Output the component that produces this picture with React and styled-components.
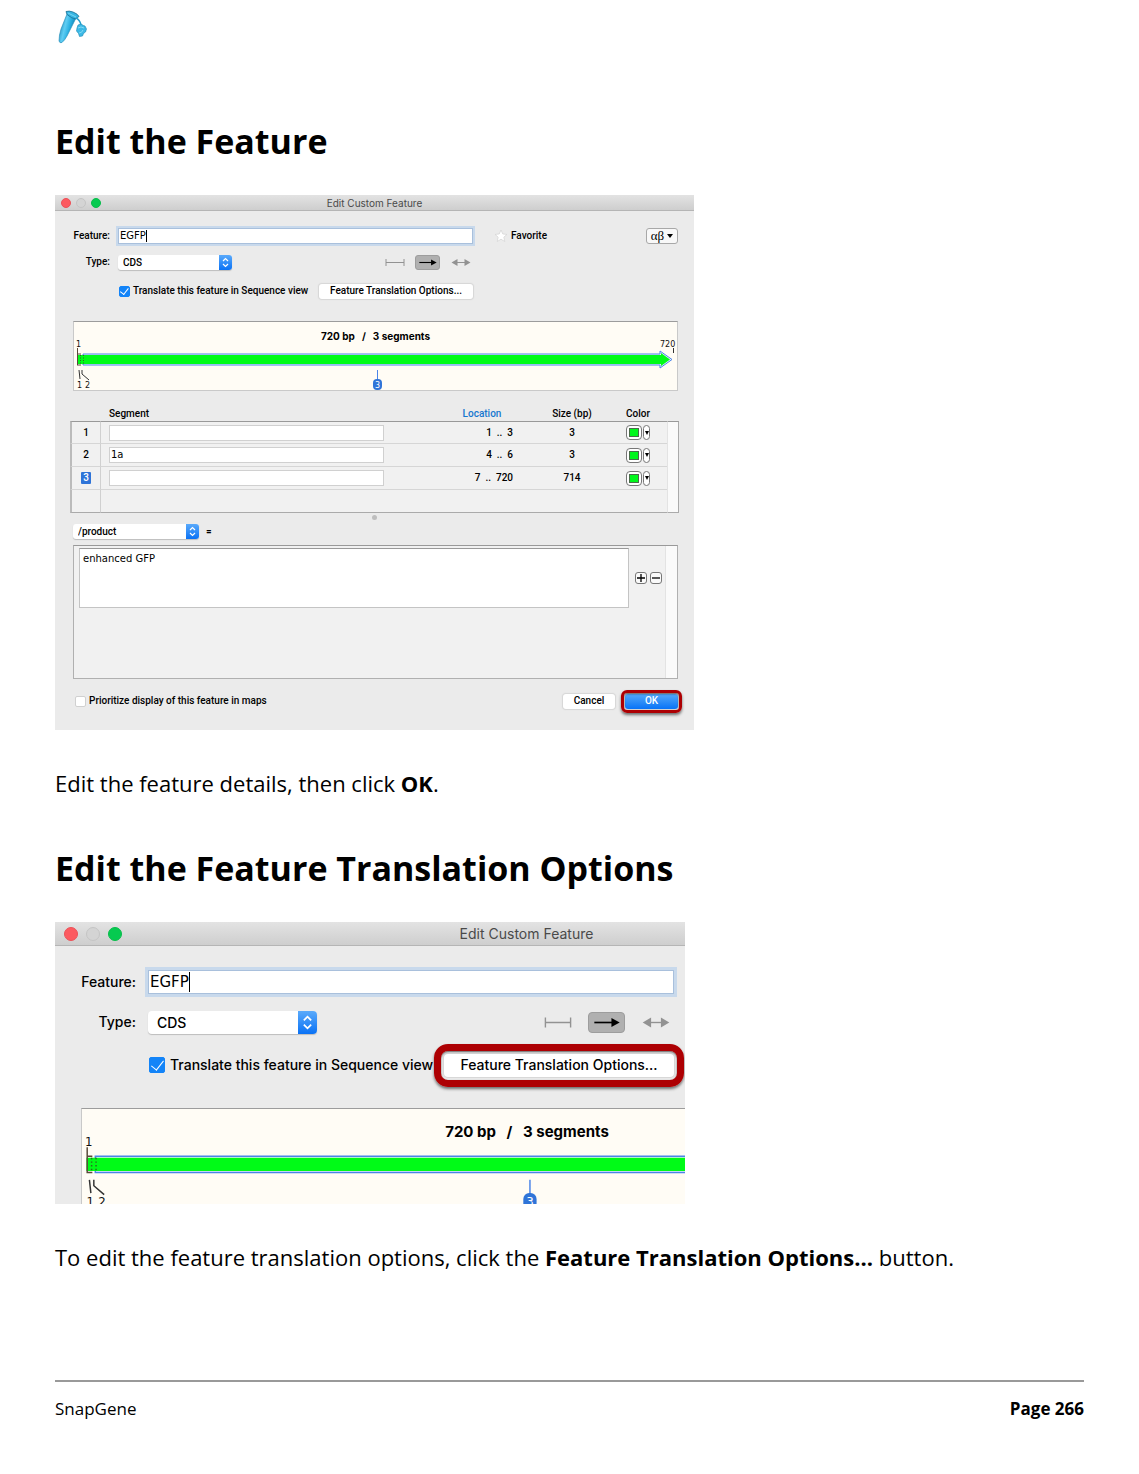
import React, { useId } from "react";
import styled, { createGlobalStyle, ThemeProvider, css } from "styled-components";

const GlobalStyle = createGlobalStyle`
  *, *::before, *::after { box-sizing: border-box; }
  body { margin: 0; background: #fff; color: #000; font-family: "Open Sans", "Noto Sans", sans-serif; }
  button, input, select, textarea { font: inherit; color: inherit; margin: 0; }
`;

/* Two zoom levels of the same dialog */
const regular = {
  width: "639px", face: "Roboto, Inter, sans-serif", text: 10, title: 10, mono: 10, heading: 10,
  bar: 16, light: 10, lightGap: 5, lightPad: 6,
  labelCol: 55, labelGap: 8, controls: 355, row: 16, padTop: 17,
  gapA: 10, gapB: 13, gapC: 22, halo: 2, typeWidth: 114, stepper: 13,
  check: 11, checkGap: 3, push: 154, shapeW: 25, shapeH: 15, shapeGap: 8, icon: 20,
  sideL: 18, sideR: 16, mapTop: 9, radius: 3, inset: 5,
};
const enlarged = {
  width: "943px", face: "Inter, Roboto, sans-serif", text: 14, title: 14, mono: 15, heading: 15,
  bar: 24, light: 14, lightGap: 8, lightPad: 9,
  labelCol: 81, labelGap: 12, controls: 526, row: 24, padTop: 24,
  gapA: 16, gapB: 19, gapC: 31, halo: 3, typeWidth: 169, stepper: 19,
  check: 16, checkGap: 5, push: 230, shapeW: 37, shapeH: 21, shapeGap: 12, icon: 30,
  sideL: 26, sideR: 25, mapTop: 15, radius: 4, inset: 9,
};

const px = (key) => ({ theme }) => `${theme[key]}px`;

const Page = styled.div`
  min-height: 100vh;
  padding: 10px 55px 53px;
  display: flex;
  flex-direction: column;
`;
const Logo = styled.svg`
  display: block;
  width: 30px;
  height: 34px;
  margin-left: 3px;
`;
const Article = styled.main`
  padding-top: 27px;
  flex: 1;
`;
const Heading = styled.h2`
  margin: 46px 0 30px;
  font-size: 34px;
  line-height: 48px;
  font-weight: 700;
`;
const Para = styled.p`
  margin: 38px 0 0;
  font-size: 22px;
  line-height: 30px;
`;
const PageFooter = styled.footer`
  border-top: 2px solid #999;
  padding-top: 15px;
  display: flex;
  justify-content: space-between;
  font-size: 17px;
  line-height: 24px;
`;

const Figure = styled.figure`
  margin: 0;
  max-width: ${({ $crop }) => ($crop ? "630px" : "639px")};
  ${({ $crop }) => $crop && css`height: 282px; overflow: hidden;`}
`;
const Dialog = styled.section`
  width: ${({ theme }) => theme.width};
  background: #ebebeb;
  font-family: ${({ theme }) => theme.face};
  font-size: ${px("text")};
  font-weight: 500;
  line-height: ${px("row")};
`;
const TitleBar = styled.header`
  display: grid;
  grid-template-columns: 1fr auto 1fr;
  align-items: center;
  height: ${px("bar")};
  padding: 0 ${px("lightPad")};
  background: linear-gradient(#e3e3e3, #cecece);
  border-bottom: 1px solid #b5b5b5;
  color: #4a4a4a;
  font-family: Inter, sans-serif;
  font-size: ${px("title")};
  font-weight: 400;
`;
const Lights = styled.div`
  display: flex;
  gap: ${px("lightGap")};
`;
const Light = styled.i`
  width: ${px("light")};
  height: ${px("light")};
  border-radius: 50%;
  background: ${({ $c }) => $c};
  border: 1px solid ${({ $b }) => $b};
`;
const Form = styled.div`
  padding-top: ${px("padTop")};
`;
const Row = styled.div`
  display: flex;
  align-items: center;
  height: ${px("row")};
  padding-right: ${px("sideR")};
  margin-bottom: ${({ theme, $gap }) => theme[$gap]}px;
`;
const Label = styled.label`
  width: ${px("labelCol")};
  margin-right: ${px("labelGap")};
  text-align: right;
  flex: none;
`;
const Controls = styled.div`
  width: ${px("controls")};
  flex: none;
  display: flex;
  align-items: center;
  justify-content: space-between;
`;
const FieldWrap = styled.div`
  position: relative;
  flex: 1;
  display: flex;
`;
const Field = styled.input`
  width: 100%;
  height: ${px("row")};
  padding: 0 1px;
  border: 1px solid #a9c0dc;
  border-radius: 0;
  outline: none;
  background: #fff;
  box-shadow: 0 0 0 ${px("halo")} #c8d9ec;
  font-family: "DejaVu Sans", sans-serif;
  font-size: ${px("mono")};
  font-weight: 400;
`;
const Caret = styled.i`
  position: absolute;
  top: 2px;
  bottom: 2px;
  left: ${({ theme }) => theme.mono * 2.6 + 2}px;
  width: 1px;
  background: #000;
`;
const SelectBox = styled.div`
  display: flex;
  width: ${({ $w }) => $w}px;
  height: ${({ theme }) => theme.row - 1}px;
  border-radius: ${px("radius")};
  background: #fff;
  box-shadow: 0 1px 1px #bdbdbd;
  overflow: hidden;
`;
const Select = styled.select`
  appearance: none;
  flex: 1;
  min-width: 0;
  border: 0;
  background: transparent;
  padding: 0 ${px("inset")};
  outline: none;
`;
const Stepper = styled.span`
  width: ${px("stepper")};
  background: linear-gradient(#5aaafb, #0a72f5);
  svg { display: block; width: 100%; height: 100%; }
`;
const Shapes = styled.div`
  display: flex;
  align-items: center;
  gap: ${px("shapeGap")};
`;
const ShapeButton = styled.button`
  display: grid;
  place-items: center;
  width: ${px("shapeW")};
  height: ${px("shapeH")};
  padding: 0;
  border: ${({ $on }) => ($on ? "1px solid #9d9d9d" : "0")};
  border-radius: ${px("radius")};
  background: ${({ $on }) => ($on ? "#b0b0b0" : "transparent")};
  svg { display: block; width: ${px("icon")}; height: 100%; }
`;
const CheckLabel = styled.label`
  display: flex;
  align-items: center;
  gap: ${px("checkGap")};
  padding-left: 1px;
  white-space: nowrap;
`;
const Check = styled.input`
  appearance: none;
  display: grid;
  place-items: center;
  width: ${px("check")};
  height: ${px("check")};
  border-radius: 2px;
  border: 1px solid #d0d0d0;
  background: #fff;
  &:checked { background: #1384f8; border-color: #1384f8; }
  &:checked::after {
    content: "";
    width: 50%;
    height: 85%;
    border: solid #fff;
    border-width: 0 1px 1px 0;
    transform: translateY(-10%) rotate(38deg);
  }
`;
const Push = styled.button`
  position: relative;
  flex: none;
  width: ${({ $w }) => $w}px;
  height: ${({ theme }) => theme.row - 1}px;
  padding: 0;
  border: 0;
  border-radius: ${px("radius")};
  background: ${({ $primary }) => ($primary ? "linear-gradient(#55a9f8, #0873f7)" : "#fff")};
  color: ${({ $primary }) => ($primary ? "#fff" : "#000")};
  box-shadow: 0 0 1px 1px #d6d6d6;
  font-weight: 500;
  line-height: 1;
  white-space: nowrap;
  &::after {
    content: ${({ $ring }) => ($ring ? '""' : "none")};
    position: absolute;
    inset: ${({ $ring }) => `-${Math.round($ring * 1.4)}px`};
    border: ${({ $ring }) => $ring}px solid #ad0003;
    border-radius: ${({ $ring }) => $ring * 2}px;
    box-shadow: 0 2px 3px #0008, inset 0 1px 2px #0009;
  }
`;
const Favorite = styled.button`
  display: flex;
  align-items: center;
  gap: 3px;
  margin-left: 21px;
  padding: 0;
  border: 0;
  background: none;
  svg { width: 14px; height: 14px; }
`;
const Greek = styled.button`
  display: flex;
  align-items: center;
  justify-content: center;
  gap: 3px;
  width: 32px;
  height: 16px;
  margin-left: auto;
  padding: 0;
  border: 1px solid #a8a8a8;
  border-radius: 3px;
  background: #f8f8f8;
  font-family: "Liberation Serif", serif;
  font-size: 13px;
  line-height: 12px;
  svg { width: 6px; height: 4px; }
`;
const MapBox = styled.div`
  position: relative;
  margin: 0 ${px("sideR")} 0 ${px("sideL")};
  background: #fffcf5;
  border: 1px solid #c9c9c9;
  border-top-color: #9c9c9c;
`;
const MapTitle = styled.strong`
  position: absolute;
  top: ${px("mapTop")};
  left: 0;
  right: 0;
  text-align: center;
  font-family: Inter, sans-serif;
  font-size: ${px("heading")};
  font-weight: 700;
  line-height: 1;
  white-space: pre;
`;
const MapSvg = styled.svg`
  display: block;
  width: 100%;
  text { font: 400 8px "DejaVu Sans", sans-serif; fill: #111; }
`;

const Segments = styled.table`
  width: 609px;
  margin: 17px 0 0 15px;
  table-layout: fixed;
  border-collapse: separate;
  border-spacing: 0;
  th { height: 13px; padding: 0; font-weight: 500; line-height: 12px; vertical-align: top; }
  td { height: 23px; padding: 0; background: #f1f1f1; border-bottom: 1px solid #d6d6d6; text-align: center; }
  tbody tr:first-child td { border-top: 1px solid #999; }
  tbody tr:last-child td { border-bottom-color: #aaa; }
  td:first-child { border-left: 2px solid #bbb; border-right: 1px solid #d0d0d0; }
  td:last-child { background: #fafafa; border-left: 1px solid #e3e3e3; border-right: 1px solid #aaa; }
  tbody tr:not(:last-child) td:last-child { border-bottom: 0; }
`;
const SegHead = styled.th`
  text-align: ${({ $left }) => ($left ? "left" : "center")};
  &&& { padding-left: ${({ $indent }) => $indent || 0}px; }
  color: ${({ $blue }) => ($blue ? "#1677cf" : "#000")};
`;
const LocationCell = styled.td`
  &&& { text-align: right; padding-right: 5px; }
  white-space: pre;
`;
const SegInput = styled.input`
  display: block;
  width: 275px;
  height: 16px;
  margin-left: 8px;
  padding: 0 1px;
  border: 1px solid #d0d0d0;
  background: #fff;
  font-family: "DejaVu Sans", sans-serif;
  font-weight: 400;
`;
const Badge = styled.span`
  display: inline-block;
  padding: 0 2px;
  line-height: 12px;
  border-radius: 1px;
  background: ${({ $on }) => ($on ? "#2f74d8" : "transparent")};
  color: ${({ $on }) => ($on ? "#fff" : "#000")};
`;
const ColorPick = styled.div`
  display: flex;
  gap: 1px;
`;
const Swatch = styled.button`
  display: grid;
  place-items: center;
  width: 16px;
  height: 15px;
  padding: 0;
  border: 1px solid #777;
  border-radius: 4px;
  background: #fff;
  &::before { content: ""; width: 10px; height: 9px; background: #00f71c; border: 1px solid #4b6b4b; }
`;
const SwatchMenu = styled.button`
  display: grid;
  place-items: center;
  width: 7px;
  height: 15px;
  padding: 0;
  border: 1px solid #777;
  border-radius: 4px;
  background: #fff;
  svg { width: 4px; height: 4px; }
`;
const Grip = styled.div`
  width: 5px;
  height: 5px;
  margin: 2px auto 4px;
  border-radius: 50%;
  background: #bebebe;
`;
const Qualifier = styled.div`
  display: flex;
  align-items: center;
  gap: 7px;
  height: 15px;
  padding-left: 18px;
`;
const Notes = styled.div`
  display: flex;
  height: 134px;
  margin: 6px 16px 0 18px;
  padding-left: 5px;
  border: 1px solid #b0b0b0;
  border-top-color: #999;
  background: #f1f1f1;
`;
const NoteText = styled.textarea`
  flex: 1;
  height: 60px;
  margin-top: 2px;
  padding: 3px;
  border: 1px solid #c4c4c4;
  border-top-color: #999;
  outline: none;
  resize: none;
  background: #fff;
  font-family: "DejaVu Sans", sans-serif;
  font-size: 10px;
  font-weight: 400;
  line-height: 14px;
`;
const NoteButtons = styled.div`
  display: flex;
  gap: 3px;
  padding: 26px 3px 0 6px;
`;
const Mini = styled.button`
  width: 12px;
  height: 12px;
  padding: 0;
  border: 1px solid #777;
  border-radius: 3px;
  background: #fafafa;
  svg { display: block; width: 10px; height: 10px; }
`;
const Track = styled.div`
  width: 12px;
  background: #fafafa;
  border-left: 1px solid #e3e3e3;
`;
const Actions = styled.div`
  display: flex;
  align-items: center;
  gap: 10px;
  padding: 14px 16px 21px 19px;
  label { margin-right: auto; }
`;

function TubeLogo() {
  return (
    <Logo viewBox="0 0 30 34" role="img" aria-label="SnapGene">
      <defs>
        <linearGradient id="tube" x1="0" y1="0" x2="1" y2="0.4">
          <stop offset="0.1" stopColor="#1685b5" />
          <stop offset="0.45" stopColor="#5fcdf3" />
          <stop offset="0.7" stopColor="#27aee0" />
          <stop offset="1" stopColor="#147ba8" />
        </linearGradient>
      </defs>
      <path d="M9 4 3 19Q1 25 1 31q.5 2.500 3 1.500Q7 30 9 26L18 8Z" fill="url(#tube)" stroke="#1c88b5" strokeWidth=".6" />
      <path d="M8 1.500q3-1 7 .5 5 2 6 4.500l-1.500 1-1.500 1.500q-4-.2-9-4.500Z" fill="#36b5e3" stroke="#166f93" strokeWidth=".8" />
      <path d="m10 3 8 4" stroke="#75d5f2" />
      <path d="M18 8q4 2 5 7" fill="none" stroke="#249fcc" strokeWidth="1.500" />
      <path d="m20 15 3-1 2.500 1.500 1.500.5 1.500 3-1 3-2 1.500-1 2.500-3 .5-1-3-2-2.500.5-3Z" fill="#3cb9e6" stroke="#1a86b2" strokeWidth=".6" />
      <path d="M20 18q3-2 6 0m-5 5q3 0 4-3" fill="none" stroke="#83dbf5" />
    </Logo>
  );
}

const StepIcon = () => (
  <Stepper aria-hidden="true">
    <svg viewBox="0 0 13 15" fill="none" stroke="#fff" strokeWidth="1.200">
      <path d="m4 6 2.500-2.500L9 6M4 9l2.500 2.500L9 9" />
    </svg>
  </Stepper>
);

const shapes = [
  ["Undirected", <path key="a" d="M1 4v7M19 4v7M1 7.500h18" stroke="#929292" />],
  ["Directed", <g key="b"><path d="M0 7.500h15" stroke="#000" strokeWidth="1.300" /><path d="m13.500 4 6.500 3.500-6.500 3.500Z" fill="#000" /></g>],
  ["Bidirectional", <g key="c" fill="#929292"><path d="M4 7.500h12" stroke="#929292" /><path d="M6.500 4 .5 7.500l6 3.500ZM13.500 4l6 3.500-6 3.500Z" /></g>],
];

function FeatureMap({ full }) {
  return (
    <MapBox>
      <MapTitle>{"720 bp   /   3 segments"}</MapTitle>
      <MapSvg viewBox="0 0 603 68" role="img" aria-label="Feature map">
        <path d="M9 32h577v-3l12 8.500-12 8.500v-3H9Z" fill="#e8f1ff" stroke="#4b84e8" />
        <path d="M3 33h584v-2l9 6.500-9 6.500v-2H3Z" fill="#00fb17" />
        <path d="M3.500 43V26M3 32h4M3 43h4" stroke="#5a4a3a" fill="none" />
        <path d="M6.500 33v10M9.500 33v10" stroke="#2b6b20" strokeDasharray="1 1.500" />
        <path d="M599.500 26v5M5 48l1 9M8 48v4l7 6" stroke="#333" fill="none" />
        <text x="2" y="25">1</text>
        {full && <text x="586" y="25">720</text>}
        <text x="3" y="65.500">1</text>
        <text x="11" y="65.500">2</text>
        <path d="M303.500 48v10" stroke="#4b84e8" />
        <rect x="299" y="57" width="9" height="11" rx="4" fill="#2f74d8" />
        <text x="301" y="65.500" style={{ fill: "#fff" }}>3</text>
      </MapSvg>
    </MapBox>
  );
}

function FeatureForm({ full }) {
  const id = useId();
  const t = full ? regular : enlarged;
  return (
    <>
      <TitleBar>
        <Lights>
          <Light $c="#fc5a60" $b="#ec5158" />
          <Light $c="#d4d4d4" $b="#c5c5c5" />
          <Light $c="#06ca50" $b="#08bd4b" />
        </Lights>
        <span>Edit Custom Feature</span>
      </TitleBar>
      <Form>
        <Row $gap="gapA">
          <Label htmlFor={id + "f"}>Feature:</Label>
          <Controls>
            <FieldWrap>
              <Field id={id + "f"} defaultValue="EGFP" />
              <Caret />
            </FieldWrap>
          </Controls>
          {full && (
            <>
              <Favorite type="button">
                <svg viewBox="0 0 14 14"><path d="m7 1 1.800 4 4.200.4-3.200 2.800 1 4.300L7 10.200l-3.800 2.300 1-4.300L1 5.400 5.200 5Z" fill="#fff" stroke="#d2d2d2" strokeWidth=".7" /></svg>
                Favorite
              </Favorite>
              <Greek type="button">
                αβ
                <svg viewBox="0 0 6 4"><path d="M0 0h6L3 4Z" /></svg>
              </Greek>
            </>
          )}
        </Row>
        <Row $gap="gapB">
          <Label htmlFor={id + "t"}>Type:</Label>
          <Controls>
            <SelectBox $w={t.typeWidth}>
              <Select id={id + "t"}><option>CDS</option></Select>
              <StepIcon />
            </SelectBox>
            <Shapes>
              {shapes.map(([name, art], i) => (
                <ShapeButton key={name} type="button" aria-label={name} $on={i === 1}>
                  <svg viewBox="0 0 20 15">{art}</svg>
                </ShapeButton>
              ))}
            </Shapes>
          </Controls>
        </Row>
        <Row $gap="gapC">
          <Label as="span" />
          <Controls>
            <CheckLabel>
              <Check type="checkbox" defaultChecked />
              Translate this feature in Sequence view
            </CheckLabel>
            <Push type="button" $w={t.push} $ring={full ? 0 : 7}>Feature Translation Options...</Push>
          </Controls>
        </Row>
      </Form>
      <FeatureMap full={full} />
    </>
  );
}

const segments = [
  ["1", "", "1  ..  3", "3"],
  ["2", "1a", "4  ..  6", "3"],
  ["3", "", "7  ..  720", "714"],
];

function SegmentTable() {
  return (
    <Segments>
      <colgroup>
        <col width="31" /><col /><col width="72" />
        <col width="108" /><col width="41" /><col width="12" />
      </colgroup>
      <thead>
        <tr>
          <th />
          <SegHead $left $indent={8}>Segment</SegHead>
          <SegHead $blue>Location</SegHead>
          <SegHead>Size (bp)</SegHead>
          <SegHead $left>Color</SegHead>
          <th />
        </tr>
      </thead>
      <tbody>
        {segments.map(([n, name, loc, size]) => (
          <tr key={n}>
            <td><Badge $on={n === "3"}>{n}</Badge></td>
            <td><SegInput aria-label={`Segment ${n} name`} defaultValue={name} /></td>
            <LocationCell>{loc}</LocationCell>
            <td>{size}</td>
            <td>
              <ColorPick>
                <Swatch type="button" aria-label={`Segment ${n} color`} />
                <SwatchMenu type="button" aria-label="More colors">
                  <svg viewBox="0 0 4 4"><path d="M0 0h4L2 4Z" /></svg>
                </SwatchMenu>
              </ColorPick>
            </td>
            <td />
          </tr>
        ))}
        <tr><td /><td /><td /><td /><td /><td /></tr>
      </tbody>
    </Segments>
  );
}

function FullDialog() {
  return (
    <ThemeProvider theme={regular}>
      <Dialog>
        <FeatureForm full />
        <SegmentTable />
        <Grip />
        <Qualifier>
          <SelectBox $w={126}>
            <Select aria-label="Qualifier"><option>/product</option></Select>
            <StepIcon />
          </SelectBox>
          <span>=</span>
        </Qualifier>
        <Notes>
          <NoteText aria-label="Product" defaultValue="enhanced GFP" />
          <NoteButtons>
            <Mini type="button" aria-label="Add"><svg viewBox="0 0 10 10"><path d="M1 5h8M5 1v8" stroke="#000" strokeWidth="1.300" /></svg></Mini>
            <Mini type="button" aria-label="Remove"><svg viewBox="0 0 10 10"><path d="M1 5h8" stroke="#000" strokeWidth="1.300" /></svg></Mini>
          </NoteButtons>
          <Track />
        </Notes>
        <Actions>
          <CheckLabel><Check type="checkbox" />Prioritize display of this feature in maps</CheckLabel>
          <Push type="button" $w={52}>Cancel</Push>
          <Push type="button" $w={53} $primary $ring={3}>OK</Push>
        </Actions>
      </Dialog>
    </ThemeProvider>
  );
}

export default function App() {
  return (
    <Page>
      <GlobalStyle />
      <TubeLogo />
      <Article>
        <Heading>Edit the Feature</Heading>
        <Figure><FullDialog /></Figure>
        <Para>Edit the feature details, then click <b>OK</b>.</Para>
        <Heading>Edit the Feature Translation Options</Heading>
        <Figure $crop>
          <ThemeProvider theme={enlarged}>
            <Dialog><FeatureForm /></Dialog>
          </ThemeProvider>
        </Figure>
        <Para>To edit the feature translation options, click the <b>Feature Translation Options...</b> button.</Para>
      </Article>
      <PageFooter>
        <span>SnapGene</span>
        <b>Page 266</b>
      </PageFooter>
    </Page>
  );
}
